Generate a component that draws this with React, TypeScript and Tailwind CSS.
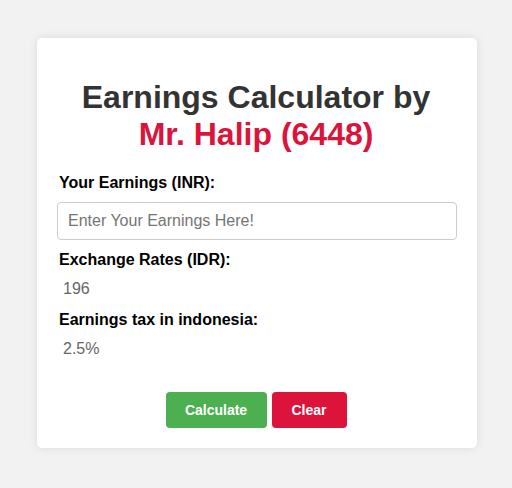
export default function App() {
  return (
    <main
      className="min-h-[488px] w-full bg-[#f2f2f2] pt-[38px] pl-[2px]"
      style={{ fontFamily: '"Liberation Sans", Arial, sans-serif' }}
    >
      <div className="mx-auto w-[440px] rounded-[5px] bg-white p-5 shadow-[0_0_10px_rgba(0,0,0,0.1)]">
        <h1 className="mt-[21px] mb-[21px] pr-[2px] text-center text-[32px] font-bold leading-[37px] text-[#333]">
          Earnings Calculator by
          <br />
          <span className="text-[#dc143c]">Mr. Halip (6448)</span>
        </h1>

        <label className="block pl-[2px] text-base font-bold leading-[18px] text-black">Your Earnings (INR):</label>
        <input
          type="text"
          placeholder="Enter Your Earnings Here!"
          className="mt-[10px] block h-[38px] w-full rounded-[4px] border border-[#ccc] px-[10px] text-base text-[#333] placeholder:text-[#757575] outline-none"
        />

        <label className="mt-[11px] block pl-[2px] text-base font-bold leading-[18px] text-black">Exchange Rates (IDR):</label>
        <p className="mt-[11px] pl-[6px] text-base leading-[18px] text-[#666]">196</p>

        <label className="mt-[13px] block pl-[2px] text-base font-bold leading-[18px] text-black">Earnings tax in indonesia:</label>
        <p className="mt-[11px] pl-[6px] text-base leading-[18px] text-[#666]">2.5%</p>

        <div className="mt-[34px] flex justify-center gap-[5px] pr-[2px]">
          <button className="h-9 w-[101px] rounded-[4px] bg-[#4caf50] text-sm font-bold text-white">Calculate</button>
          <button className="h-9 w-[75px] rounded-[4px] bg-[#dc143c] text-sm font-bold text-white">Clear</button>
        </div>
      </div>
    </main>
  );
}
